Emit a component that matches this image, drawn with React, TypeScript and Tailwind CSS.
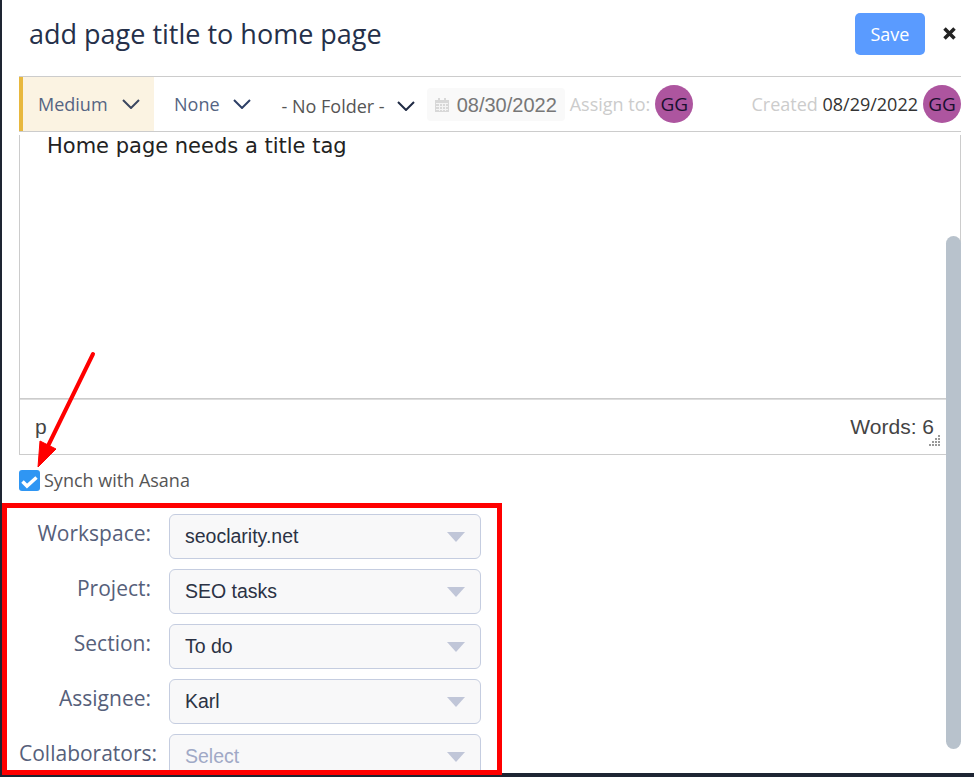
const fields = [
    { label: "Workspace:", value: "seoclarity.net" },
    { label: "Project:", value: "SEO tasks" },
    { label: "Section:", value: "To do" },
    { label: "Assignee:", value: "Karl" },
    { label: "Collaborators:", value: "Select", placeholder: true },
];

function Avatar() {
    return (
        <div className="flex size-[38px] shrink-0 items-center justify-center rounded-full bg-[#ad559f] text-[19px] text-[#1a1030]">
            GG
        </div>
    );
}

function Chevron({ color }: { color: string }) {
    return (
        <svg width="18" height="10" viewBox="0 0 18 10" fill="none" stroke={color} strokeWidth="2" className="shrink-0">
            <path d="M1 1l8 8 8-8" />
        </svg>
    );
}

export default function App() {
    return (
        <div className="relative h-[777px] w-[974px] overflow-hidden bg-[#1e2533] pl-[2px] pb-[4px] font-['Open_Sans',sans-serif]">
            <div className="h-full overflow-hidden bg-white pl-[17px] pr-[13px]">
                {/* Header */}
                <div className="flex h-[76px] items-center justify-between pl-[10px] pr-[5px]">
                    <h1 className="pb-[7px] text-[27px] text-[#25304a]">add page title to home page</h1>
                    <div className="flex items-center gap-[18px] pb-[8px]">
                        <button className="h-[42px] w-[70px] rounded-[5px] bg-[#5a9bff] text-[18px] text-white">Save</button>
                        <svg width="13" height="13" viewBox="0 0 13 13" stroke="#222" strokeWidth="3.500" className="mb-[2px]">
                            <path d="M1.500 1.500l10 10M11.500 1.500l-10 10" />
                        </svg>
                    </div>
                </div>

                {/* Toolbar */}
                <div className="flex h-[56px] items-center border-y border-[#cccccc] text-[18px]">
                    <div className="flex h-full w-[135px] shrink-0 items-center gap-[14px] border-l-4 border-[#e8b83e] bg-[#fbf3e2] pl-[15px] text-[#556482]">
                        Medium
                        <Chevron color="#3a4660" />
                    </div>
                    <div className="ml-[20px] flex items-center gap-[13px] text-[#556482]">
                        None
                        <Chevron color="#2d3f66" />
                    </div>
                    <div className="ml-[31px] flex items-center gap-[12px] pt-[4px] text-[#555]">
                        - No Folder -
                        <Chevron color="#1f2a44" />
                    </div>
                    <div className="ml-[12px] flex h-[33px] w-[138px] shrink-0 items-center gap-[8px] rounded-[4px] bg-[#f9f9f9] pl-[8px] pt-[2px] font-['Liberation_Sans',sans-serif] text-[20px] text-[#777]">
                        <svg className="size-[14px]" viewBox="0 0 14 14" fill="#d8d8d8">
                            <path d="M0 2h14v12H0z" />
                            <path d="M3 0h2v3H3zM9 0h2v3H9z" />
                            <path d="M1 5h12v1H1zM1 8h12v1H1zM1 11h12v1H1zM4 5h1v8H4zM7 5h1v8H7zM10 5h1v8h-1z" fill="#f4f4f4" />
                        </svg>
                        08/30/2022
                    </div>
                    <span className="ml-[5px] text-[#cccccc]">Assign to:</span>
                    <div className="ml-[5px]">
                        <Avatar />
                    </div>
                    <div className="ml-auto flex items-center gap-[5px]">
                        <span className="text-[#cccccc]">
                            Created <span className="text-[#333]">08/29/2022</span>
                        </span>
                        <Avatar />
                    </div>
                </div>

                {/* Editor */}
                <div className="mt-[3px] border-x border-b border-[#cccccc]">
                    <div className="h-[264px] border-b border-[#cccccc] pl-[27px] font-['DejaVu_Sans',sans-serif] text-[21px] leading-[22px] text-[#222]">
                        Home page needs a title tag
                    </div>
                    <div className="relative flex h-[55px] items-center justify-between border-t border-[#dddddd] pl-[15px] pr-[26px] font-['Liberation_Sans',sans-serif] text-[21px] text-[#444]">
                        <span>p</span>
                        <span>Words: 6</span>
                        <svg className="absolute bottom-[7px] right-[20px] size-[12px]" viewBox="0 0 12 12" fill="#999">
                            <path d="M10 0h2v2h-2zM7 3h2v2H7zM10 3h2v2h-2zM4 6h2v2H4zM7 6h2v2H7zM10 6h2v2h-2zM1 9h2v2H1zM4 9h2v2H4zM7 9h2v2H7zM10 9h2v2h-2z" />
                        </svg>
                    </div>
                </div>

                {/* Asana */}
                <label className="mt-[13px] flex h-[24px] items-center gap-[4px] text-[18px] text-[#555]">
                    <span className="flex size-[21px] items-center justify-center rounded-[3px] bg-[#2f96f3]">
                        <svg className="mt-[2px] size-[19px]" viewBox="0 0 19 19" fill="none" stroke="#fff" strokeWidth="3.500">
                            <path d="M2.500 9.500l4.500 4.500L16.500 5.500" />
                        </svg>
                    </span>
                    Synch with Asana
                </label>

                <div className="mt-[22px] flex flex-col gap-[10px]">
                    {fields.map((f) => (
                        <div key={f.label} className="flex items-center">
                            <div className="w-[132px] shrink-0 whitespace-nowrap pb-[5px] text-right text-[21px] text-[#56607a]">
                                <span className={f.placeholder ? "-mr-[6px] inline-block" : ""}>{f.label}</span>
                            </div>
                            <div className="relative ml-[18px] flex h-[45px] w-[312px] shrink-0 items-center rounded-[6px] border border-[#c5cde0] bg-[#f8f8f9] pl-[15px] font-['Liberation_Sans',sans-serif] text-[19.5px]">
                                <span className={f.placeholder ? "text-[#a0a9c6]" : "text-[#2b3244]"}>{f.value}</span>
                                <span className="absolute right-[15px] top-[17px] h-0 w-0 border-x-[9px] border-t-[10px] border-x-transparent border-t-[#c0c6d8]" />
                            </div>
                        </div>
                    ))}
                </div>
            </div>

            {/* Scrollbar */}
            <div className="absolute left-[946px] top-[236px] h-[513px] w-[15px] rounded-full bg-[#b8c2cc]" />

            {/* Annotation: red box */}
            <div className="absolute left-[2px] top-[503px] h-[272px] w-[500px] border-[5px] border-[#ff0000]" />

            {/* Annotation: arrow */}
            <svg className="absolute left-0 top-0" width="120" height="480" fill="none">
                <path d="M93 354L46 450" stroke="#ff0000" strokeWidth="4" strokeLinecap="round" />
                <path d="M38 467L40 441L56 449Z" fill="#ff0000" stroke="#ff0000" strokeWidth="1" />
            </svg>
        </div>
    );
}
